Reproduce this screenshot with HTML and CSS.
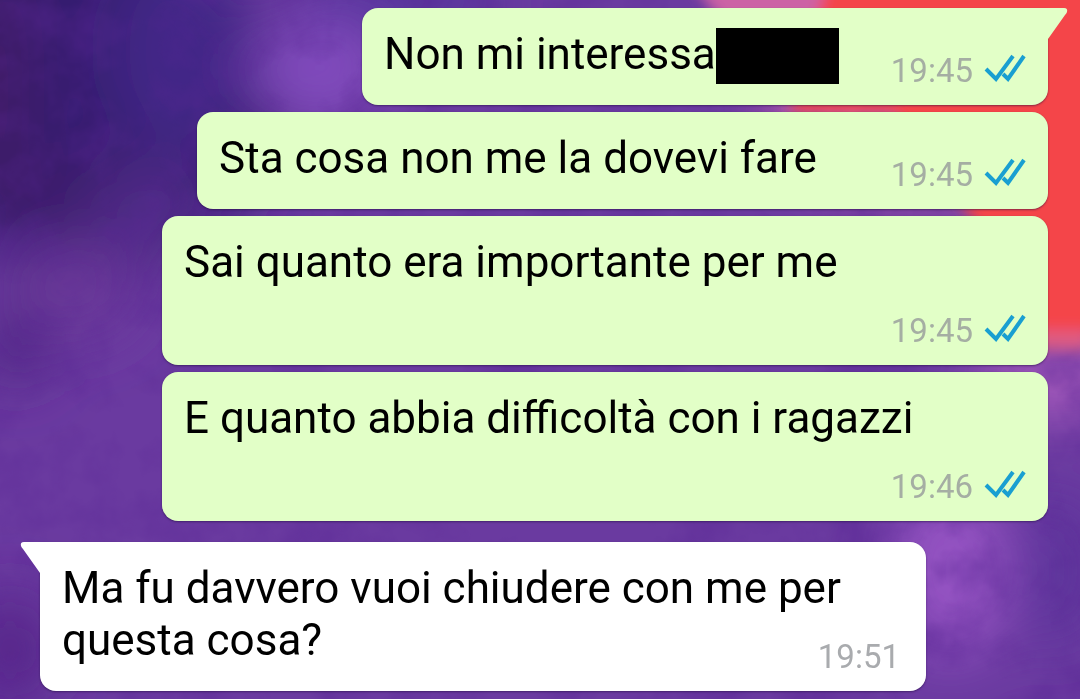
FILE: index.html
```html
<!DOCTYPE html>
<html lang="it">
<head>
<meta charset="utf-8">
<meta name="viewport" content="width=device-width, initial-scale=1">
<title>Chat</title>
<link rel="stylesheet" href="styles.css">
</head>
<body>
<svg class="wallpaper" viewBox="0 0 1080 699" preserveAspectRatio="none" aria-hidden="true">
  <defs>
    <filter id="soft" x="-50%" y="-50%" width="200%" height="200%"><feGaussianBlur stdDeviation="28"/></filter>
    <filter id="edge" x="-20%" y="-20%" width="140%" height="140%"><feGaussianBlur stdDeviation="7"/></filter>
    <filter id="cloud" x="0" y="0" width="100%" height="100%">
      <feTurbulence type="fractalNoise" baseFrequency="0.018" numOctaves="4" seed="8"/>
      <feColorMatrix values="0 0 0 0 0.1  0 0 0 0 0.02  0 0 0 0 0.3  2.2 0 0 0 -0.9"/>
    </filter>
  </defs>
  <rect width="1080" height="699" fill="#6a3aa0"/>
  <g filter="url(#soft)">
    <ellipse cx="90" cy="100" rx="190" ry="180" fill="#351c70"/>
    <ellipse cx="0" cy="90" rx="30" ry="140" fill="#431a68"/>
    <ellipse cx="180" cy="50" rx="70" ry="100" fill="#432787"/>
    <ellipse cx="320" cy="70" rx="70" ry="50" fill="#814bbd"/>
    <ellipse cx="400" cy="0" rx="110" ry="22" fill="#4e329b"/>
    <ellipse cx="100" cy="190" rx="80" ry="30" fill="#3d1a6b"/>
    <ellipse cx="150" cy="210" rx="60" ry="50" fill="#4f2987"/>
    <ellipse cx="70" cy="290" rx="70" ry="50" fill="#693899"/>
    <ellipse cx="15" cy="345" rx="35" ry="40" fill="#502783"/>
    <ellipse cx="10" cy="650" rx="45" ry="60" fill="#56288a"/>
    <ellipse cx="1060" cy="380" rx="90" ry="35" fill="#a95cbd"/>
    <ellipse cx="950" cy="570" rx="60" ry="90" fill="#9453c2"/>
    <ellipse cx="1055" cy="570" rx="50" ry="80" fill="#5f349c"/>
    <ellipse cx="930" cy="120" rx="170" ry="80" fill="#b85cad"/>
  </g>
  <rect width="1080" height="699" filter="url(#cloud)" class="clouds"/>
  <g filter="url(#edge)">
    <path d="M690-20H850V70H800Q735 50 690-20Z" fill="#cc62a5"/>
    <path d="M828-20H1100V335H1040L970 215L895 112H790Z" fill="#f4454a"/>
    <path d="M1035 330H1090V350H1035Z" fill="#de5b83"/>
  </g>
</svg>

<main class="chat">
  <article class="bubble sent first">
    <svg class="tail" viewBox="0 0 21 34" aria-hidden="true"><path d="M0 0H17Q21 0 20 4Q19.500 5.500 18 7L1 31V34H0Z" fill="#e2ffc7"/></svg>
    <p class="text">Non mi interessa<span class="redacted"></span><span class="meta"><time>19:45</time><svg class="ticks" viewBox="0 0 42 30" role="img" aria-label="Letto"><path d="M2 16L12 26L29 3M19 21L24 26L40 3" fill="none" stroke="#199fd1" stroke-width="4"/></svg></span></p>
  </article>
  <article class="bubble sent">
    <p class="text">Sta cosa non me la dovevi fare<span class="meta"><time>19:45</time><svg class="ticks" viewBox="0 0 42 30" role="img" aria-label="Letto"><path d="M2 16L12 26L29 3M19 21L24 26L40 3" fill="none" stroke="#199fd1" stroke-width="4"/></svg></span></p>
  </article>
  <article class="bubble sent">
    <p class="text">Sai quanto era importante per me<span class="meta"><time>19:45</time><svg class="ticks" viewBox="0 0 42 30" role="img" aria-label="Letto"><path d="M2 16L12 26L29 3M19 21L24 26L40 3" fill="none" stroke="#199fd1" stroke-width="4"/></svg></span></p>
  </article>
  <article class="bubble sent">
    <p class="text">E quanto abbia difficoltà con i ragazzi<span class="meta"><time>19:46</time><svg class="ticks" viewBox="0 0 42 30" role="img" aria-label="Letto"><path d="M2 16L12 26L29 3M19 21L24 26L40 3" fill="none" stroke="#199fd1" stroke-width="4"/></svg></span></p>
  </article>
  <article class="bubble received first">
    <svg class="tail" viewBox="0 0 21 34" aria-hidden="true"><path d="M21 0H4Q0 0 1 4Q1.500 5.500 3 7L20 31V34H21Z" fill="#fff"/></svg>
    <p class="text">Ma fu davvero vuoi chiudere con me per questa cosa?<span class="meta"><time>19:51</time></span></p>
  </article>
</main>
</body>
</html>
```
FILE: styles.css
```css
* {
  box-sizing: border-box;
}

body {
  margin: 0;
  background: #6a3aa0;
  font-family: Roboto, "Liberation Sans", sans-serif;
}

.wallpaper {
  position: fixed;
  inset: 0;
  z-index: -1;
  width: 100%;
  height: 100%;
}

.clouds {
  opacity: 0.45;
}

.chat {
  display: flex;
  flex-direction: column;
  gap: 7px;
  padding: 8px 32px 8px 40px;
}

.bubble {
  position: relative;
  max-width: 886px;
  padding: 20px 22px 14px;
  border-radius: 16px;
  box-shadow: 0 1px 2px rgba(30, 10, 60, 0.5);
}

.sent {
  align-self: flex-end;
  background: #e2ffc7;
}

.received {
  align-self: flex-start;
  margin-top: 14px;
  padding-right: 26px;
  background: #fff;
}

.sent.first {
  border-top-right-radius: 0;
}

.received.first {
  border-top-left-radius: 0;
}

.tail {
  position: absolute;
  top: 0;
  width: 21px;
  height: 34px;
}

.sent .tail {
  left: calc(100% - 1px);
}

.received .tail {
  right: calc(100% - 1px);
}

.text {
  display: flow-root;
  margin: 0;
  color: #000;
  font-size: 44px;
  line-height: 52px;
}

.redacted {
  display: inline-block;
  width: 123px;
  height: 56px;
  margin-right: -22px;
  background: #000;
  vertical-align: top;
}

.meta {
  float: right;
  display: flex;
  align-items: flex-end;
  gap: 11px;
  height: 63px;
  padding-left: 74px;
  color: #a5aea3;
  font-size: 33px;
  line-height: 40px;
}

.received .meta {
  color: #a9abae;
}

.ticks {
  width: 42px;
  height: 30px;
  margin-bottom: 8px;
}
```
